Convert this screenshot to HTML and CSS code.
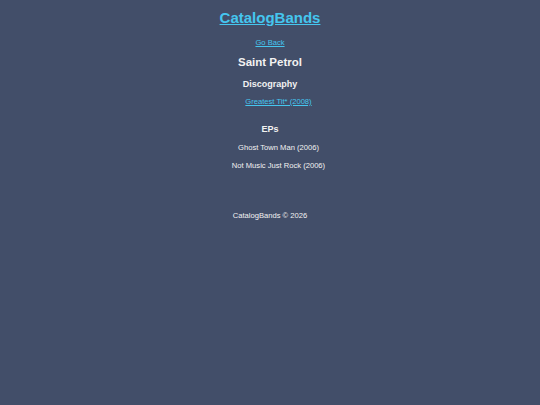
FILE: index.html
```html
<!DOCTYPE html>
<html>
<head>
<meta charset="utf-8">
<link rel="stylesheet" href="styles.css">
</head>
<body>
<header class="site-header">
  <a class="brand" href="#">CatalogBands</a>
  <a class="back" href="#">Go Back</a>
</header>
<main class="band">
  <h1 class="band-name">Saint Petrol</h1>
  <section class="group">
    <h2 class="group-title">Discography</h2>
    <ul class="list">
      <li><a href="#">Greatest Tit* (2008)</a></li>
    </ul>
  </section>
  <section class="group eps">
    <h2 class="group-title">EPs</h2>
    <ul class="list">
      <li>Ghost Town Man (2006)</li>
      <li>Not Music Just Rock (2006)</li>
    </ul>
  </section>
</main>
<footer class="site-footer">CatalogBands © 2026</footer>
</body>
</html>
```
FILE: styles.css
```css
html, body {
  margin: 0;
  padding: 0;
}
body {
  background: #424e69;
  color: #f2f2f2;
  font-family: "Liberation Sans", Arial, sans-serif;
  text-align: center;
  min-height: 405px;
}
a { color: #45c6ef; }
.site-header {
  display: flex;
  flex-direction: column;
  align-items: center;
  padding-top: 9px;
}
.brand {
  font-size: 15px;
  font-weight: bold;
  line-height: 18px;
}
.back {
  font-size: 7.6px;
  line-height: 10px;
  margin-top: 11px;
}
.band-name {
  font-size: 11.5px;
  margin: 7px 0 0;
  line-height: 14px;
}
.group-title {
  font-size: 9px;
  margin: 0;
  line-height: 11px;
}
.group { margin-top: 10px; }
.eps { margin-top: 17px; }
.list {
  list-style: none;
  margin: 7px 0 0;
  padding: 0 0 0 17px;
  font-size: 7.6px;
  line-height: 10px;
}
.eps .list { margin-top: 8px; }
.list li + li { margin-top: 8px; }
.site-footer {
  margin-top: 40px;
  font-size: 7.6px;
  line-height: 10px;
}
```
